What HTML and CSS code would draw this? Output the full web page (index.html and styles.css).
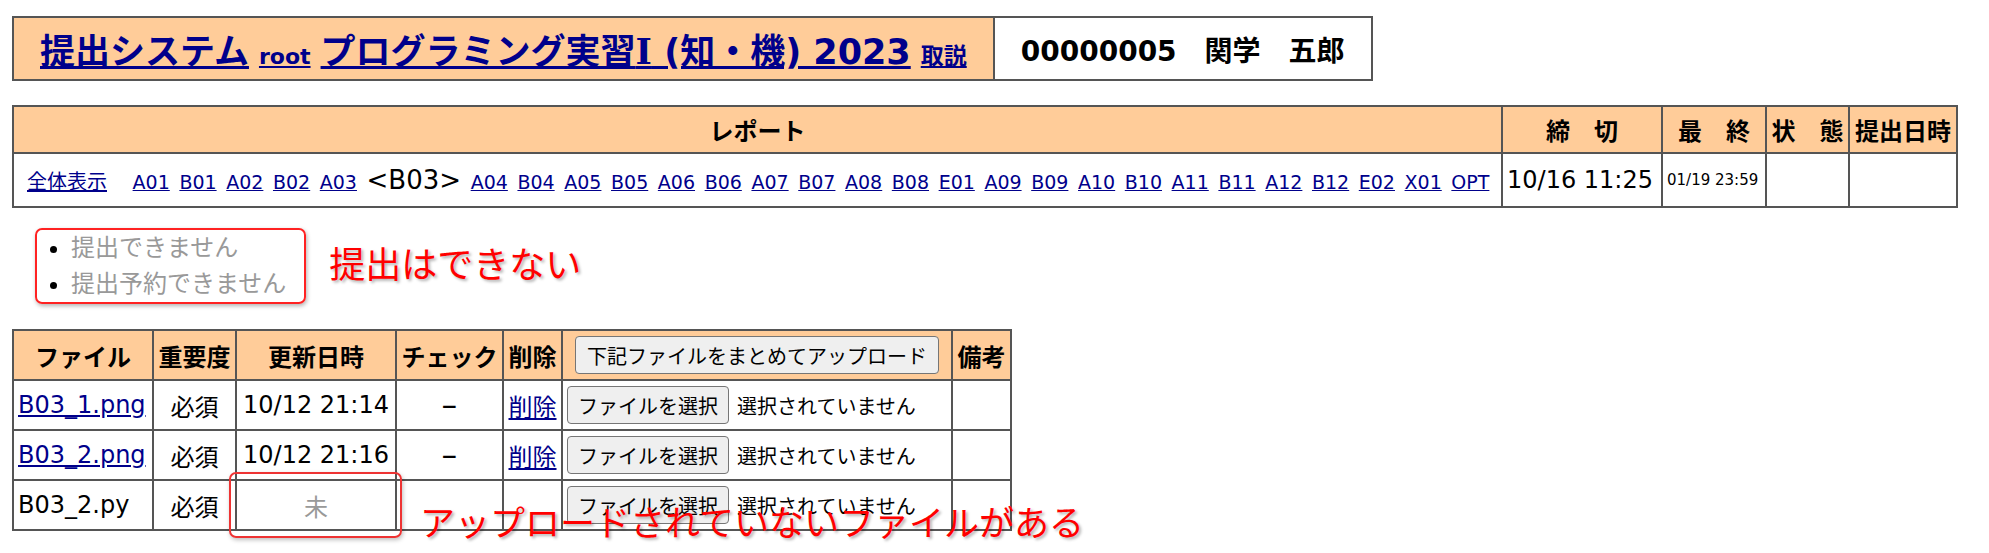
FILE: index.html
```html
<!DOCTYPE html>
<html lang="ja">
  <head>
    <meta charset="utf-8" />
    <title>提出システム</title>
    <link rel="stylesheet" href="styles.css">
  </head>
  <body>
    <!-- system / course banner -->
    <table class="banner">
      <tr>
        <td class="title">
          <div class="title-line">
            <a href="#" class="sys">提出システム</a>
            <a href="#" class="user">root</a>
            <a href="#" class="course">プログラミング実習<span class="roman">Ⅰ</span> (知・機) 2023</a>
            <a href="#" class="manual">取説</a>
          </div>
        </td>
        <td class="student">00000005　関学　五郎</td>
      </tr>
    </table>

    <!-- report selector -->
    <table class="reports">
      <colgroup>
        <col class="c-report"><col class="c-due"><col class="c-last"><col class="c-state"><col class="c-sent">
      </colgroup>
      <tr class="head-row">
        <th>レポート</th>
        <th>締　切</th>
        <th>最　終</th>
        <th>状　態</th>
        <th>提出日時</th>
      </tr>
      <tr class="body-row">
        <td class="nav-cell">
          <div class="nav">
            <a href="#" class="all">全体表示</a>
            <a href="#">A01</a> <a href="#">B01</a> <a href="#">A02</a> <a href="#">B02</a> <a href="#">A03</a>
            <span class="current">&lt;B03&gt;</span>
            <a href="#">A04</a> <a href="#">B04</a> <a href="#">A05</a> <a href="#">B05</a> <a href="#">A06</a>
            <a href="#">B06</a> <a href="#">A07</a> <a href="#">B07</a> <a href="#">A08</a> <a href="#">B08</a>
            <a href="#">E01</a> <a href="#">A09</a> <a href="#">B09</a> <a href="#">A10</a> <a href="#">B10</a>
            <a href="#">A11</a> <a href="#">B11</a> <a href="#">A12</a> <a href="#">B12</a> <a href="#">E02</a>
            <a href="#">X01</a> <a href="#">OPT</a>
          </div>
        </td>
        <td class="due">10/16 11:25</td>
        <td class="last">01/19 23:59</td>
        <td></td>
        <td></td>
      </tr>
    </table>

    <!-- submission status -->
    <div class="notice">
      <ul class="status">
        <li>提出できません</li>
        <li>提出予約できません</li>
      </ul>
      <span class="note">提出はできない</span>
    </div>

    <!-- files of this report -->
    <div class="files">
      <table class="uploads">
        <colgroup>
          <col class="c-file"><col class="c-need"><col class="c-date"><col class="c-check"><col class="c-del"><col class="c-up"><col class="c-memo">
        </colgroup>
        <tr>
          <th>ファイル</th>
          <th>重要度</th>
          <th>更新日時</th>
          <th>チェック</th>
          <th>削除</th>
          <th><button type="button" class="btn btn-all">下記ファイルをまとめてアップロード</button></th>
          <th>備考</th>
        </tr>
        <tr>
          <td class="name"><a href="#">B03_1.png</a></td>
          <td class="mid">必須</td>
          <td class="mid">10/12 21:14</td>
          <td class="mid"><span class="dash">−</span></td>
          <td class="mid"><a href="#">削除</a></td>
          <td class="up"><button type="button" class="btn">ファイルを選択</button><span class="picked">選択されていません</span></td>
          <td></td>
        </tr>
        <tr>
          <td class="name"><a href="#">B03_2.png</a></td>
          <td class="mid">必須</td>
          <td class="mid">10/12 21:16</td>
          <td class="mid"><span class="dash">−</span></td>
          <td class="mid"><a href="#">削除</a></td>
          <td class="up"><button type="button" class="btn">ファイルを選択</button><span class="picked">選択されていません</span></td>
          <td></td>
        </tr>
        <tr>
          <td class="name">B03_2.py</td>
          <td class="mid">必須</td>
          <td class="mid missing">未</td>
          <td></td>
          <td></td>
          <td class="up"><button type="button" class="btn">ファイルを選択</button><span class="picked">選択されていません</span></td>
          <td></td>
        </tr>
      </table>
      <div class="mark"></div>
      <span class="note note-missing">アップロードされていないファイルがある</span>
    </div>
  </body>
</html>
```

FILE: styles.css
```css
/* Base page */
body {
  margin: 0;
  padding: 16px 12px;
  font-family: "DejaVu Sans", "Noto Sans CJK JP", sans-serif;
  color: #000;
  background: #fff;
}

a {
  color: #00008b;
}

table {
  border-collapse: collapse;
}

th,
td {
  border: 2px solid #555;
  padding: 0 4px;
}

th {
  background: #fc9;
  font-weight: bold;
}

/* Banner */
.banner td {
  height: 61px;
  padding: 0 26px;
}

.banner .title {
  background: #fc9;
}

.title-line {
  display: flex;
  align-items: baseline;
  gap: 10px;
  font-weight: bold;
  white-space: nowrap;
}

.sys,
.course {
  font-size: 35px;
}

.roman {
  font-family: "DejaVu Serif", "Liberation Serif", serif;
}

.user {
  font-size: 22px;
}

.manual {
  font-size: 23px;
}

.student {
  font-size: 28px;
  font-weight: bold;
  white-space: nowrap;
}

/* Report table */
.reports {
  margin-top: 24px;
  table-layout: fixed;
  width: 1944px;
  font-size: 24px;
}

.c-report { width: 1489px; }
.c-due { width: 160px; }
.c-last { width: 104px; }
.c-state { width: 83px; }
.c-sent { width: 108px; }

.head-row {
  height: 47px;
}

.body-row {
  height: 54px;
}

.nav-cell {
  padding-left: 13px;
}

.nav {
  display: flex;
  align-items: baseline;
  gap: 9.6px;
  font-size: 19px;
  white-space: nowrap;
}

.nav .all {
  font-size: 20px;
  margin-right: 16px;
}

.nav .current {
  font-size: 26px;
}

.due {
  white-space: nowrap;
}

.last {
  font-size: 15px;
  white-space: nowrap;
}

/* Status box */
.notice {
  display: flex;
  align-items: center;
  gap: 23px;
  margin: 20px 0 0 23px;
}

.status {
  margin: 0;
  padding: 0 18px 0 34px;
  border: 2px solid #f22;
  border-radius: 7px;
  box-shadow: 1px 2px 4px rgba(0, 0, 0, 0.3);
  color: #999;
  font-size: 24px;
  line-height: 36px;
}

.status li::marker {
  color: #000;
}

.note {
  color: #f00;
  font-size: 36px;
  line-height: 1;
  text-shadow: 2px 2px 3px rgba(0, 0, 0, 0.3);
  white-space: nowrap;
}

/* File table */
.files {
  position: relative;
  margin-top: 25px;
  width: max-content;
}

.uploads {
  table-layout: fixed;
  width: 998px;
  font-size: 24px;
}

.uploads tr {
  height: 50px;
}

.c-file { width: 140px; }
.c-need { width: 83px; }
.c-date { width: 160px; }
.c-check { width: 107px; }
.c-del { width: 59px; }
.c-up { width: 390px; }
.c-memo { width: 59px; }

.uploads .name {
  white-space: nowrap;
}

.uploads .mid {
  text-align: center;
  white-space: nowrap;
}

.dash {
  font-size: 20px;
  font-weight: bold;
}

.missing {
  color: #999;
}

.up {
  white-space: nowrap;
}

.btn {
  height: 38px;
  padding: 0 10px;
  border: 1px solid #767676;
  border-radius: 4px;
  background: #efefef;
  color: #000;
  font-family: "Noto Sans CJK JP", sans-serif;
  font-size: 20px;
  vertical-align: middle;
}

.btn-all {
  padding: 0 11px;
  font-weight: normal;
}

.picked {
  margin-left: 8px;
  font-size: 20px;
  vertical-align: middle;
}

/* Annotations over the file table */
.mark {
  position: absolute;
  left: 217px;
  top: 143px;
  width: 169px;
  height: 62px;
  border: 2px solid #e33;
  border-radius: 7px;
  box-shadow: 1px 2px 4px rgba(0, 0, 0, 0.25);
}

.note-missing {
  position: absolute;
  left: 408px;
  top: 178px;
  font-size: 35px;
}
```
